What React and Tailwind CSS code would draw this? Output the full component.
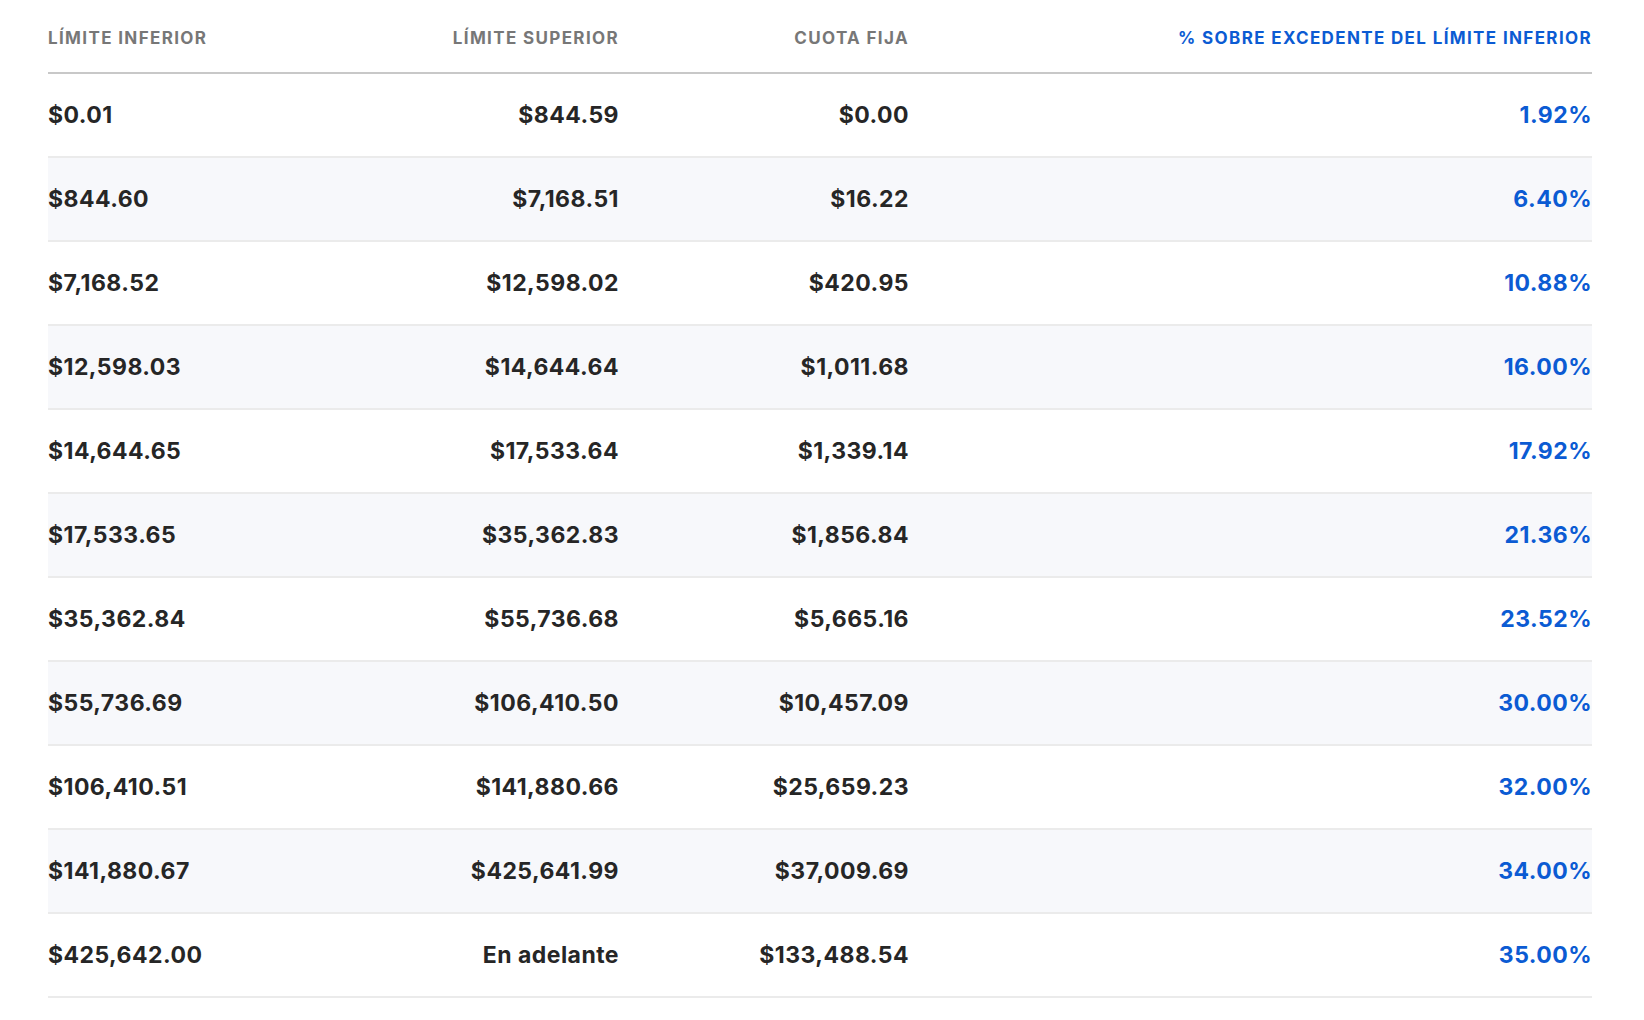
import React from "react";

const rows = [
  ["$0.01", "$844.59", "$0.00", "1.92%"],
  ["$844.60", "$7,168.51", "$16.22", "6.40%"],
  ["$7,168.52", "$12,598.02", "$420.95", "10.88%"],
  ["$12,598.03", "$14,644.64", "$1,011.68", "16.00%"],
  ["$14,644.65", "$17,533.64", "$1,339.14", "17.92%"],
  ["$17,533.65", "$35,362.83", "$1,856.84", "21.36%"],
  ["$35,362.84", "$55,736.68", "$5,665.16", "23.52%"],
  ["$55,736.69", "$106,410.50", "$10,457.09", "30.00%"],
  ["$106,410.51", "$141,880.66", "$25,659.23", "32.00%"],
  ["$141,880.67", "$425,641.99", "$37,009.69", "34.00%"],
  ["$425,642.00", "En adelante", "$133,488.54", "35.00%"],
];

const cols = "grid grid-cols-[300px_271px_290px_1fr] items-center";

export default function App() {
  return (
    <div className="min-h-screen bg-white pl-12 pr-[52px] font-['Inter',sans-serif]">
      {/* Header */}
      <div
        className={`${cols} h-[74px] pt-[5px] border-b-2 border-[#c8c8c8] text-[17px] font-bold uppercase tracking-[0.08em] text-[#777777]`}
      >
        <div>Límite inferior</div>
        <div className="text-right">Límite superior</div>
        <div className="text-right">Cuota fija</div>
        <div className="text-right text-[#0b5bd3]">
          % Sobre excedente del límite inferior
        </div>
      </div>

      {/* Body */}
      {rows.map((r, i) => (
        <div
          key={i}
          className={`${cols} h-[84px] border-b-2 border-[#ebebeb] text-[23px] font-bold tracking-[0.02em] text-[#262626] ${
            i % 2 === 1 ? "bg-[#f7f8fb]" : "bg-white"
          }`}
        >
          <div>{r[0]}</div>
          <div className="text-right">{r[1]}</div>
          <div className="text-right">{r[2]}</div>
          <div className="text-right text-[#0b5bd3]">{r[3]}</div>
        </div>
      ))}
    </div>
  );
}
